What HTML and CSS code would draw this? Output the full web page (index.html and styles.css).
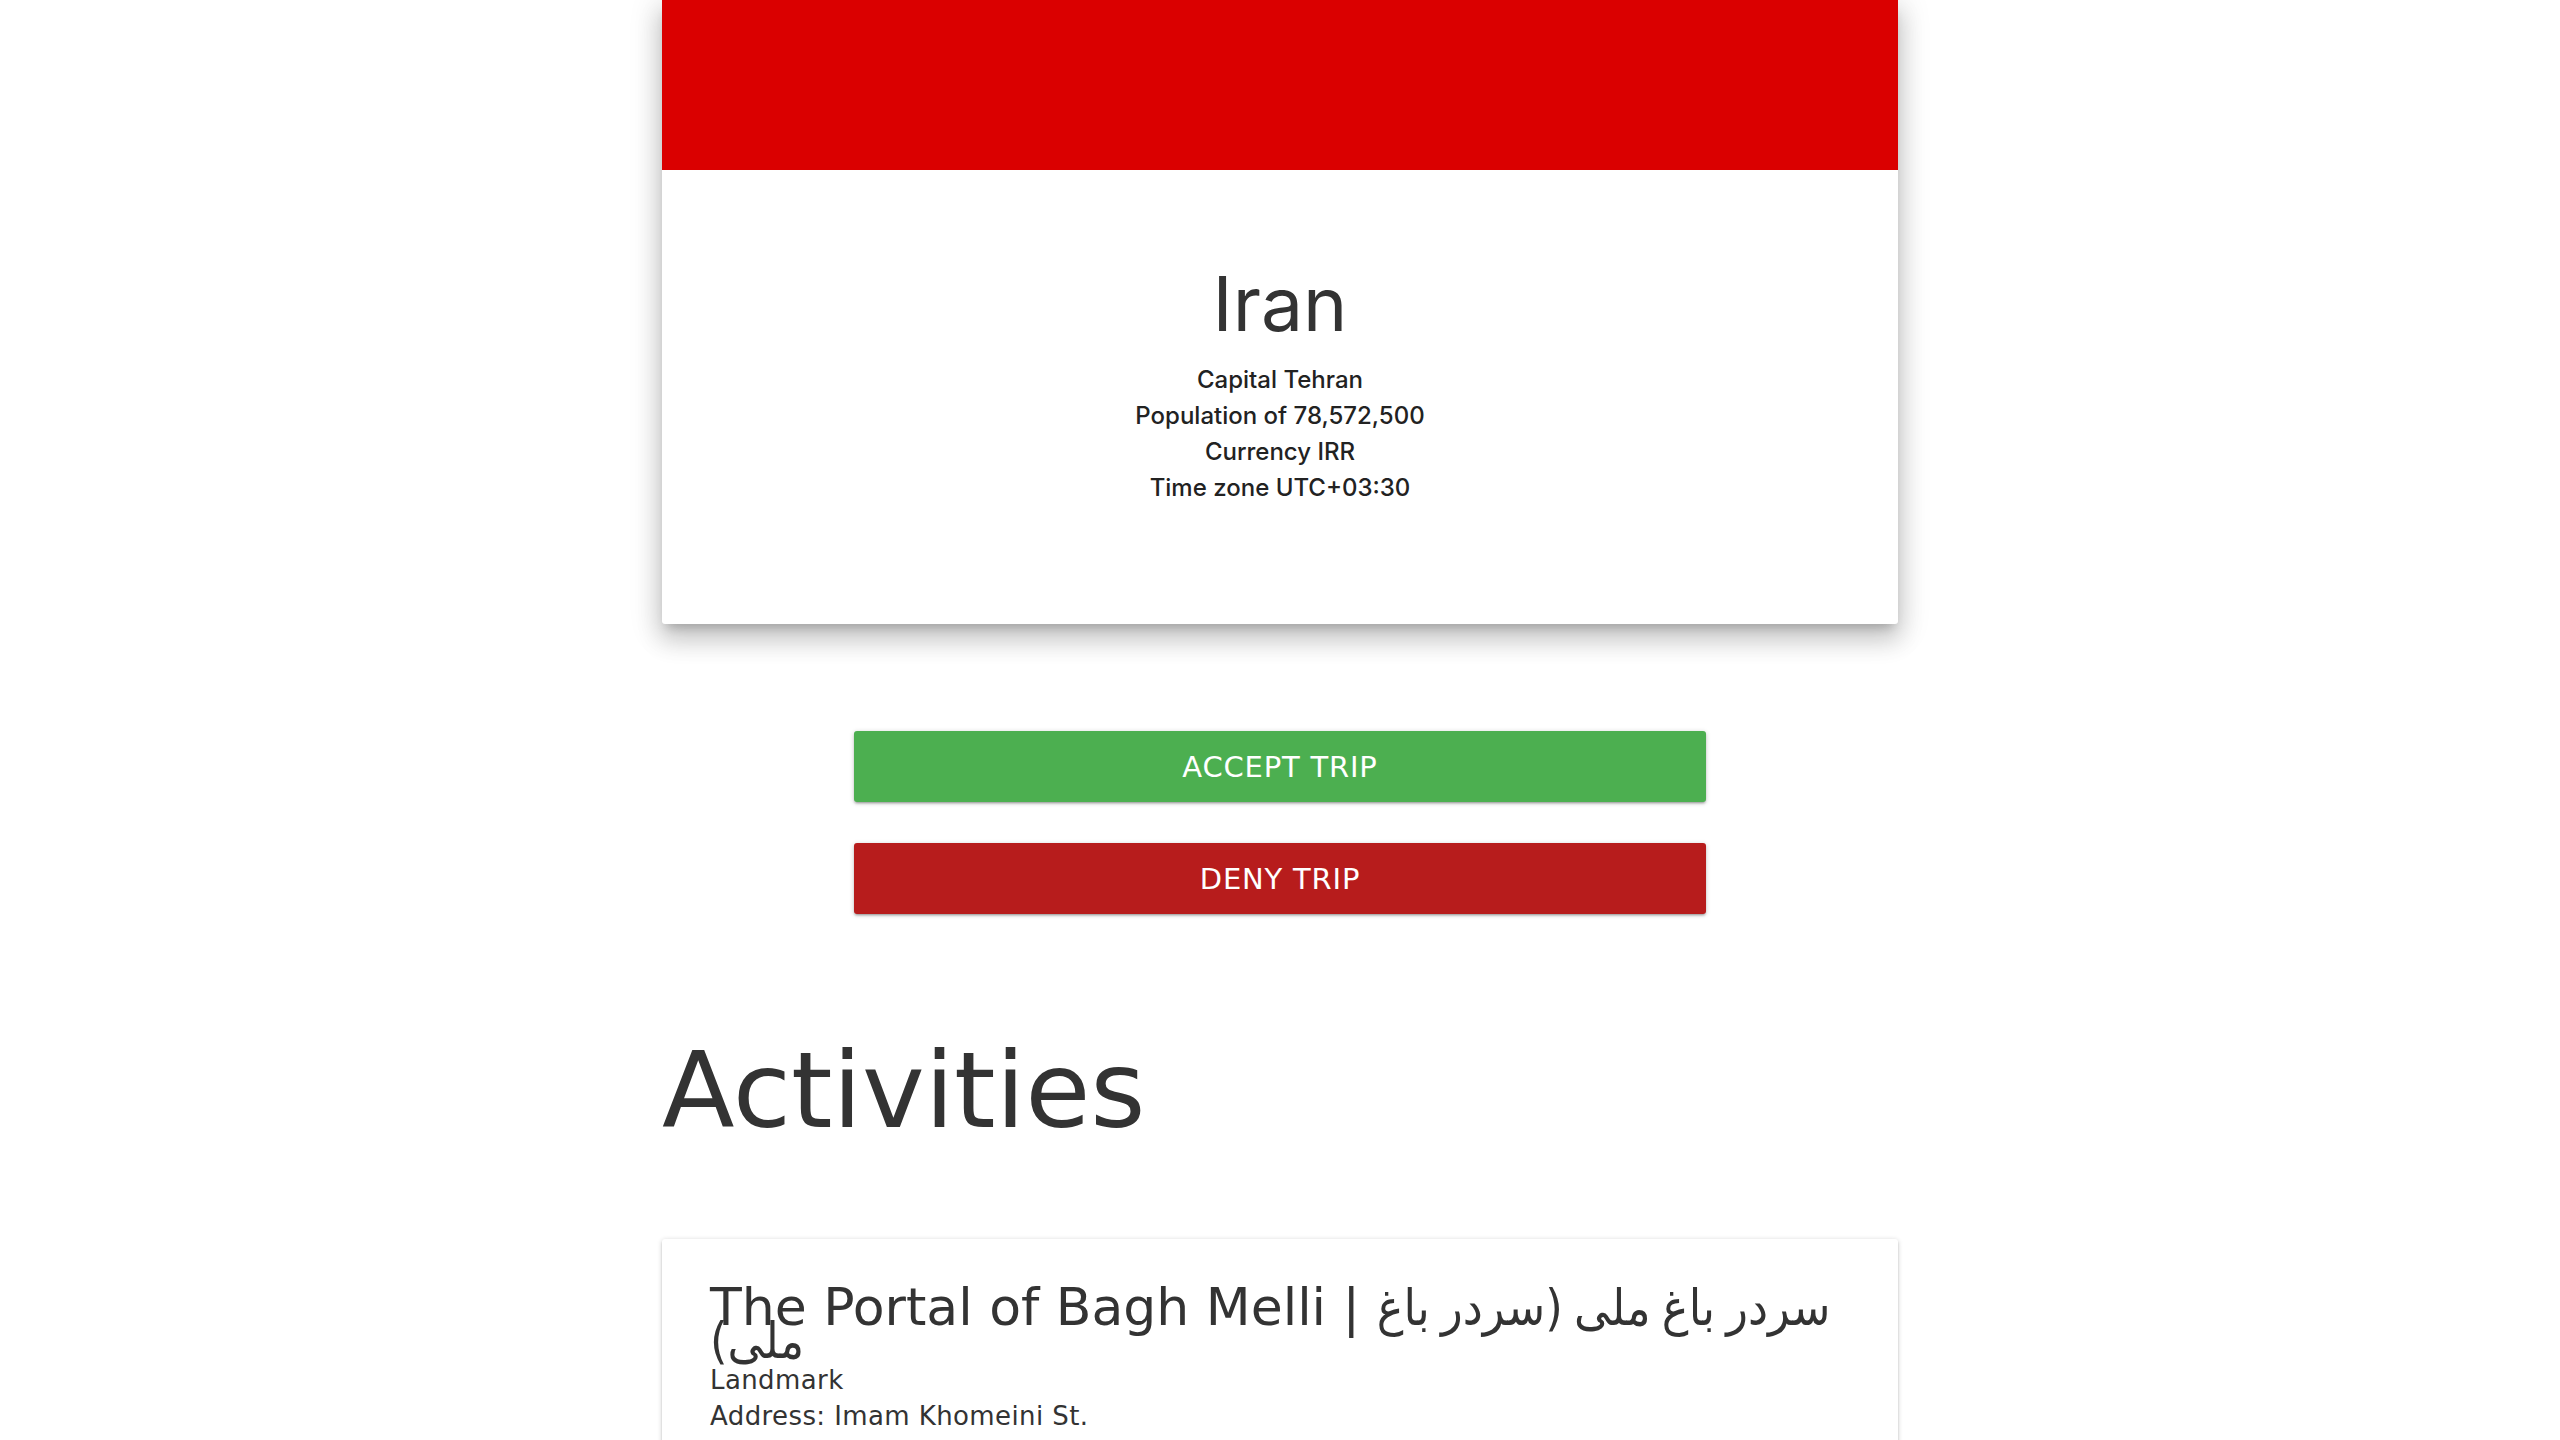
FILE: index.html
```html
<!DOCTYPE html>
<html lang="en">

<head>
    <meta charset="UTF-8">
    <meta name="viewport" content="width=device-width, initial-scale=1.0">
    <title>Trip - Iran</title>
    <link rel="stylesheet" href="styles.css">
</head>

<body>
    <main class="container">
        <section class="country-card">
            <div class="flag-bar"></div>
            <div class="country-info">
                <h1 class="country-name">Iran</h1>
                <p class="country-fact">Capital Tehran</p>
                <p class="country-fact">Population of 78,572,500</p>
                <p class="country-fact">Currency IRR</p>
                <p class="country-fact">Time zone UTC+03:30</p>
            </div>
        </section>

        <div class="trip-actions">
            <button class="trip-btn accept">Accept trip</button>
            <button class="trip-btn deny">Deny trip</button>
        </div>

        <h2 class="section-title">Activities</h2>

        <div class="activity-card">
            <h3 class="activity-title">The Portal of Bagh Melli | <span class="local-name">سردر باغ ملی (سردر باغ ملی)</span></h3>
            <p class="activity-type">Landmark</p>
            <p class="activity-address">Address: Imam Khomeini St.</p>
        </div>
    </main>
</body>

</html>
```

FILE: styles.css
```css
body {
    margin: 0;
    background-color: #fff;
    color: #333;
    font-family: 'DejaVu Sans', Verdana, sans-serif;
}

.container {
    width: 1236px;
    margin: 0 auto;
}

/* country summary card */
.country-card {
    background-color: #fff;
    border-radius: 0 0 3px 3px;
    box-shadow: 0 16px 24px 2px rgba(0, 0, 0, 0.14),
        0 6px 30px 5px rgba(0, 0, 0, 0.12),
        0 8px 10px -5px rgba(0, 0, 0, 0.2);
}

.flag-bar {
    height: 170px;
    background-color: #da0000;
}

.country-info {
    padding: 94px 24px 118px;
    text-align: center;
    font-family: 'Inter', 'Noto Sans', sans-serif;
}

.country-name {
    margin: 0 0 18px;
    font-size: 75px;
    font-weight: 400;
    line-height: 80px;
    color: #333;
}

.country-fact {
    margin: 0;
    font-size: 24px;
    font-weight: 500;
    line-height: 36px;
    color: #222;
}

/* accept / deny */
.trip-actions {
    display: flex;
    flex-direction: column;
    align-items: center;
    gap: 41px;
    padding-top: 107px;
}

.trip-btn {
    width: 852px;
    height: 71px;
    border: none;
    border-radius: 3px;
    color: #fff;
    font-family: 'DejaVu Sans', Verdana, sans-serif;
    font-size: 29px;
    letter-spacing: 0.8px;
    text-transform: uppercase;
    cursor: pointer;
    box-shadow: 0 2px 2px 0 rgba(0, 0, 0, 0.14),
        0 3px 1px -2px rgba(0, 0, 0, 0.12),
        0 1px 5px 0 rgba(0, 0, 0, 0.2);
}

.trip-btn.accept {
    background-color: #4caf50;
}

.trip-btn.deny {
    background-color: #b71c1c;
}

.section-title {
    margin: 118px 0 90px;
    font-size: 106px;
    font-weight: 400;
    line-height: 117px;
    color: #333;
}

/* activity list */
.activity-card {
    padding: 52px 48px 40px;
    background-color: #fff;
    border-radius: 3px;
    box-shadow: 0 2px 2px 0 rgba(0, 0, 0, 0.14),
        0 3px 1px -2px rgba(0, 0, 0, 0.12),
        0 1px 5px 0 rgba(0, 0, 0, 0.2);
}

.activity-title {
    margin: 0 0 5px;
    font-size: 52px;
    font-weight: 400;
    line-height: 32px;
}

.local-name {
    font-family: 'DejaVu Sans Condensed', 'DejaVu Sans', sans-serif;
    font-size: 50px;
    word-spacing: -3px;
}

.activity-type,
.activity-address {
    margin: 0;
    font-size: 26px;
    line-height: 36px;
    letter-spacing: 0.4px;
}
```
